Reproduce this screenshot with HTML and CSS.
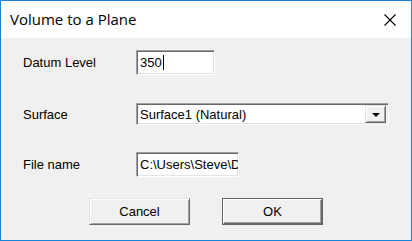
FILE: index.html
```html
<!doctype html>
<html>
  <head>
    <meta charset="utf-8">
    <title>Volume to a Plane</title>
    <link rel="stylesheet" href="styles.css">
  </head>
  <body>
    <div class="window">
      <div class="titlebar">
        <span class="title">Volume to a Plane</span>
        <svg class="close" width="12" height="12" viewBox="0 0 12 12">
          <path d="M0.5 0.5 L11.5 11.5 M11.5 0.5 L0.5 11.5" stroke="#000" stroke-width="1.1" fill="none"/>
        </svg>
      </div>
      <div class="content">
        <div class="row row-datum">
          <label>Datum Level</label>
          <div class="field field-datum"><span>350</span><span class="caret"></span></div>
        </div>
        <div class="row row-surface">
          <label>Surface</label>
          <div class="combo">
            <span class="combo-text">Surface1 (Natural)</span>
            <span class="combo-btn"><span class="arrow"></span></span>
          </div>
        </div>
        <div class="row row-file">
          <label>File name</label>
          <div class="field field-file"><span>C:\Users\Steve\Documents\volume.txt</span></div>
        </div>
        <div class="buttons">
          <div class="btn">Cancel</div>
          <div class="btn default"><div class="btn-inner">OK</div></div>
        </div>
      </div>
    </div>
  </body>
</html>
```

FILE: styles.css
```css
html, body {
    margin: 0;
    padding: 0;
}
body {
    font: 13px "Liberation Sans", Arial, sans-serif;
    color: #000;
    background: #f0f0f0;
}
.window {
    width: 412px;
    height: 241px;
    box-sizing: border-box;
    border: 1px solid #1883d7;
    background: #f0f0f0;
    display: flex;
    flex-direction: column;
}
.titlebar {
    height: 37px;
    background: #fff;
    display: flex;
    align-items: center;
    padding: 0 15px 0 9px;
    flex-shrink: 0;
}
.title {
    font: 15px "Open Sans", "Noto Sans", sans-serif;
    flex: 1;
    margin-top: -1px;
}
.close {
    display: block;
}
.content {
    padding: 12px 0 0 22px;
    display: flex;
    flex-direction: column;
}
.row {
    display: flex;
    align-items: center;
}
.row label {
    width: 113px;
    flex-shrink: 0;
}
.row-surface {
    margin-top: 28px;
}
.row-file {
    margin-top: 27px;
}
.field {
    box-sizing: border-box;
    height: 25px;
    background: #fff;
    border: 1px solid;
    border-color: #a0a0a0 #fff #fff #a0a0a0;
    box-shadow: inset 1px 1px #696969, inset -1px -1px #e3e3e3;
    padding: 0 0 0 3px;
    display: flex;
    align-items: center;
    font-size: 13px;
    overflow: hidden;
    white-space: nowrap;
}
.field-datum {
    width: 79px;
}
.field-file {
    width: 103px;
}
.caret {
    display: inline-block;
    width: 1px;
    height: 15px;
    background: #000;
    margin-left: 1px;
}
.combo {
    box-sizing: border-box;
    width: 253px;
    height: 22px;
    background: #fff;
    border: 1px solid;
    border-color: #a0a0a0 #fff #fff #a0a0a0;
    box-shadow: inset 1px 1px #696969, inset -1px -1px #e3e3e3;
    display: flex;
    align-items: center;
    padding: 2px 2px 2px 3px;
}
.combo-text {
    flex: 1;
    font-size: 13px;
}
.combo-btn {
    box-sizing: border-box;
    width: 21px;
    height: 18px;
    background: #f0f0f0;
    border: 1px solid;
    border-color: #e3e3e3 #696969 #696969 #e3e3e3;
    box-shadow: inset 1px 1px #fff, inset -1px -1px #a0a0a0;
    display: flex;
    align-items: center;
    justify-content: center;
}
.arrow {
    width: 0;
    height: 0;
    border-left: 4px solid transparent;
    border-right: 4px solid transparent;
    border-top: 4px solid #000;
    margin-top: 1px;
}
.buttons {
    display: flex;
    margin-top: 21px;
    padding-left: 66px;
    gap: 32px;
}
.btn {
    box-sizing: border-box;
    width: 101px;
    height: 27px;
    background: #f0f0f0;
    border: 1px solid;
    border-color: #e3e3e3 #696969 #696969 #e3e3e3;
    box-shadow: inset 1px 1px #fff, inset -1px -1px #a0a0a0;
    display: flex;
    align-items: center;
    justify-content: center;
}
.btn.default {
    border: 1px solid #646464;
    box-shadow: none;
    padding: 0;
}
.btn-inner {
    box-sizing: border-box;
    width: 100%;
    height: 100%;
    border: 1px solid;
    border-color: #fff #696969 #696969 #fff;
    box-shadow: inset -1px -1px #a0a0a0;
    display: flex;
    align-items: center;
    justify-content: center;
}
```
